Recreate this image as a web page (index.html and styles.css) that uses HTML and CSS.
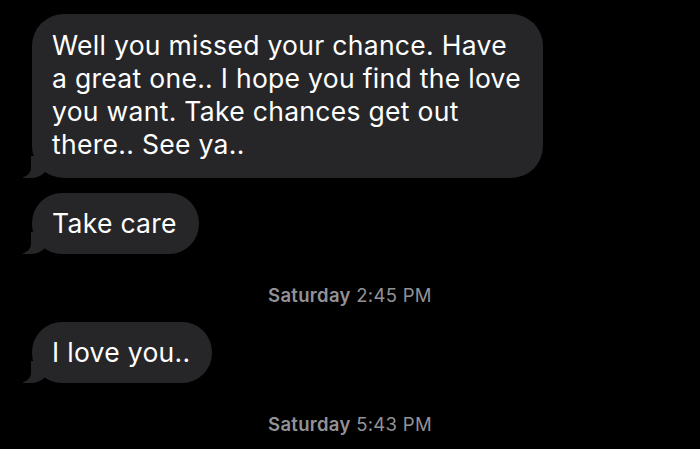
FILE: index.html
```html
<!DOCTYPE html>
<html lang="en">

<head>
    <meta charset="UTF-8">
    <meta name="viewport" content="width=device-width, initial-scale=1.0">
    <title>Messages</title>
    <link rel="stylesheet" href="styles.css">
</head>

<body>
    <div class="thread">
        <div class="bubble big">Well you missed your chance. Have a great one.. I hope you find the love you want. Take chances get out there.. See ya..</div>
        <div class="bubble">Take care</div>
        <div class="stamp"><b>Saturday</b> 2:45 PM</div>
        <div class="bubble">I love you..</div>
        <div class="stamp"><b>Saturday</b> 5:43 PM</div>
    </div>
</body>

</html>
```

FILE: styles.css
```css
body {
    margin: 0;
    padding: 0;
    background: #000;
    font-family: 'Inter', 'Liberation Sans', sans-serif;
    overflow: hidden;
}

.thread {
    display: flex;
    flex-direction: column;
    align-items: flex-start;
    padding: 14px 0 0 32px;
}

.bubble {
    position: relative;
    background: #262628;
    color: #fff;
    font-size: 26.5px;
    letter-spacing: 0.3px;
    line-height: 33px;
    padding: 14px 22px 14px 20px;
    border-radius: 30px;
    margin-bottom: 15px;
}

.bubble.big {
    padding: 15px 20px 17px;
    width: 471px;
    border-radius: 32px;
}

/* tail */
.bubble::before {
    content: '';
    position: absolute;
    left: -9px;
    bottom: 0;
    width: 26px;
    height: 22px;
    background: #262628;
    border-bottom-right-radius: 18px 16px;
}

.bubble::after {
    content: '';
    position: absolute;
    left: -15px;
    bottom: 0;
    width: 14px;
    height: 24px;
    background: #000;
    border-bottom-right-radius: 12px 10px;
}

.stamp {
    align-self: stretch;
    text-align: center;
    color: #929296;
    font-size: 18.5px;
    letter-spacing: 0.3px;
    margin: 15px 0 16px;
    padding-right: 32px;
}

.stamp b {
    font-weight: 600;
}
```
